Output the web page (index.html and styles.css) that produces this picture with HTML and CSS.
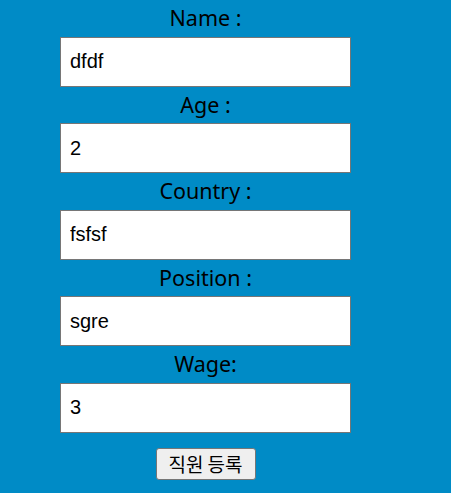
FILE: index.html
```html
<!DOCTYPE html>
<html>
<head>
<meta charset="utf-8">
<link rel="stylesheet" href="styles.css">
</head>
<body>
<form class="form">
  <label class="label">Name :</label>
  <input class="field" type="text" value="dfdf">
  <label class="label">Age :</label>
  <input class="field" type="text" value="2">
  <label class="label">Country :</label>
  <input class="field" type="text" value="fsfsf">
  <label class="label">Position :</label>
  <input class="field" type="text" value="sgre">
  <label class="label">Wage:</label>
  <input class="field" type="text" value="3">
  <button class="submit" type="button">직원 등록</button>
</form>
</body>
</html>
```
FILE: styles.css
```css
html, body {
  margin: 0;
  padding: 0;
  background: #008bc6;
  height: 100%;
}
.form {
  width: 411px;
  display: flex;
  flex-direction: column;
  align-items: center;
}
.label {
  font-family: "Noto Sans", sans-serif;
  font-size: 21.5px;
  line-height: 36.5px;
  height: 36.5px;
  color: #000;
}
.field {
  box-sizing: border-box;
  width: 291px;
  height: 50px;
  margin: 0;
  padding: 0 9px;
  border: 1px solid #767676;
  background: #fff;
  font-family: "Liberation Sans", Arial, sans-serif;
  font-size: 20px;
  color: #000;
  outline: none;
}
.submit {
  margin-top: 15px;
  width: 100px;
  height: 32px;
  box-sizing: border-box;
  border: 1px solid #767676;
  border-radius: 3px;
  background: #efefef;
  font-family: "Noto Sans CJK KR", sans-serif;
  font-size: 19px;
  line-height: 30px;
  color: #000;
  padding: 0;
}
```
